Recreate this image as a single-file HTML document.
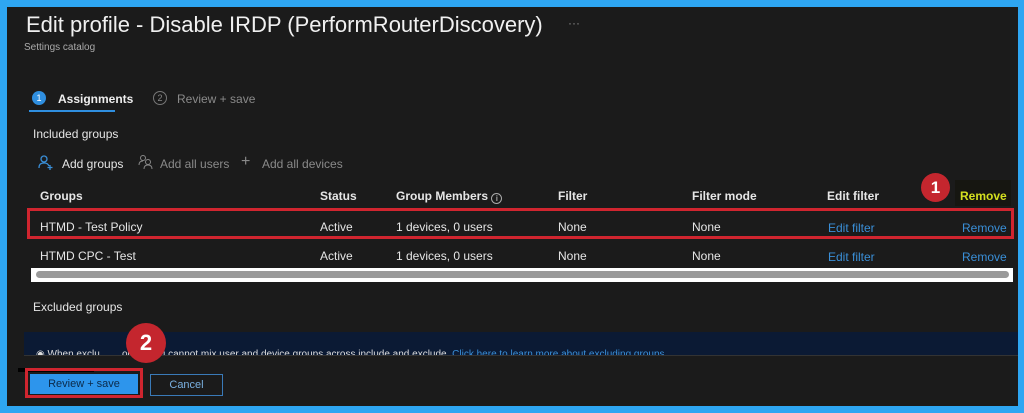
<!DOCTYPE html><html><head><style>
*{margin:0;padding:0;box-sizing:border-box}
body{width:1024px;height:413px;background:#2ea6f2;font-family:"Liberation Sans",sans-serif;position:relative;overflow:hidden}
#in{position:absolute;left:7px;top:7px;width:1011px;height:399px;background:#1b1b1b}
.a{position:absolute;white-space:nowrap}
.w{color:#e6e6e6;font-size:12px}
.h{color:#e6e6e6;font-size:12px;font-weight:bold}
.l{color:#3a8fd8;font-size:12px}
.g{color:#8a8a8a;font-size:12px}
</style></head><body>
<div id="in"></div>
<div class="a" style="left:26px;top:12px;font-size:22px;color:#f0f0f0">Edit profile - Disable IRDP (PerformRouterDiscovery)</div>
<div class="a" style="left:568px;top:16px;color:#888;font-size:12px">···</div>
<div class="a" style="left:24px;top:42px;font-size:10px;color:#aaa">Settings catalog</div>
<div class="a" style="left:32px;top:91px;width:14px;height:14px;border-radius:50%;background:#2f8fe0;color:#fff;font-size:9px;text-align:center;line-height:14px">1</div>
<div class="a" style="left:58px;top:92px;color:#eee;font-size:12px;font-weight:bold">Assignments</div>
<div class="a" style="left:29px;top:110px;width:86px;height:2px;background:#2f8fe0"></div>
<div class="a" style="left:153px;top:91px;width:14px;height:14px;border-radius:50%;border:1px solid #777;color:#888;font-size:9px;text-align:center;line-height:12px">2</div>
<div class="a g" style="left:177px;top:92px">Review + save</div>
<div class="a w" style="left:33px;top:127px">Included groups</div>
<svg class="a" style="left:38px;top:154px" width="16" height="16" viewBox="0 0 16 16" fill="none" stroke="#3a8fd8" stroke-width="1.3"><circle cx="6" cy="5" r="3"/><path d="M1 14c0-4 2-5 5-5s4 1 5 3M12 11v5M9.5 13.5h5"/></svg>
<div class="a w" style="left:62px;top:157px">Add groups</div>
<svg class="a" style="left:138px;top:154px" width="16" height="16" viewBox="0 0 16 16" fill="none" stroke="#888" stroke-width="1"><circle cx="5" cy="4" r="2.5"/><path d="M1 11c0-3 2-4 4-4"/><circle cx="10" cy="8" r="2.5"/><path d="M6 15c0-3 2-4 4-4s4 1 4 4"/></svg>
<div class="a g" style="left:160px;top:157px">Add all users</div>
<div class="a g" style="left:241px;top:153px;font-size:16px">+</div>
<div class="a g" style="left:262px;top:157px">Add all devices</div>
<div class="a h" style="left:40px;top:189px">Groups</div>
<div class="a h" style="left:320px;top:189px">Status</div>
<div class="a h" style="left:396px;top:189px">Group Members <span style="display:inline-block;width:11px;height:11px;border:1px solid #aaa;border-radius:50%;font-size:8px;text-align:center;line-height:9px;font-weight:normal;vertical-align:-1px">i</span></div>
<div class="a h" style="left:558px;top:189px">Filter</div>
<div class="a h" style="left:692px;top:189px">Filter mode</div>
<div class="a h" style="left:827px;top:189px">Edit filter</div>
<div class="a" style="left:955px;top:180px;width:56px;height:26px;background:#161611"></div>
<div class="a" style="left:960px;top:189px;color:#d4e020;font-size:12px;font-weight:bold">Remove</div>
<div class="a" style="left:921px;top:173px;width:29px;height:29px;border-radius:50%;background:#c4262e;color:#fff;font-size:17px;font-weight:bold;text-align:center;line-height:29px">1</div>
<div class="a" style="left:27px;top:208px;width:987px;height:31px;border:3px solid #d0252f"></div>
<div class="a w" style="left:40px;top:220px">HTMD - Test Policy</div>
<div class="a w" style="left:320px;top:220px">Active</div>
<div class="a w" style="left:396px;top:220px">1 devices, 0 users</div>
<div class="a w" style="left:558px;top:220px">None</div>
<div class="a w" style="left:692px;top:220px">None</div>
<div class="a l" style="left:828px;top:221px">Edit filter</div>
<div class="a l" style="left:962px;top:221px">Remove</div>
<div class="a w" style="left:40px;top:249px">HTMD CPC - Test</div>
<div class="a w" style="left:320px;top:249px">Active</div>
<div class="a w" style="left:396px;top:249px">1 devices, 0 users</div>
<div class="a w" style="left:558px;top:249px">None</div>
<div class="a w" style="left:692px;top:249px">None</div>
<div class="a l" style="left:828px;top:250px">Edit filter</div>
<div class="a l" style="left:962px;top:250px">Remove</div>
<div class="a" style="left:31px;top:268px;width:982px;height:14px;background:#fff"></div>
<div class="a" style="left:36px;top:271px;width:973px;height:7px;border-radius:4px;background:#9a9a9a"></div>
<div class="a w" style="left:33px;top:300px">Excluded groups</div>
<div class="a" style="left:24px;top:332px;width:994px;height:23px;background:#0b1a34"></div>
<div class="a" style="left:24px;top:355px;width:994px;height:1px;background:#333"></div>
<div class="a" style="left:36px;top:348px;font-size:10px;color:#ddd;height:7px;overflow:hidden;line-height:14px">&#9673; When exclu&nbsp;&nbsp;&nbsp;&nbsp;&nbsp;&nbsp;&nbsp;&nbsp;oups, you cannot mix user and device groups across include and exclude. <span style="color:#3a8fd8">Click here to learn more about excluding groups</span></div>
<div class="a" style="left:126px;top:323px;width:40px;height:40px;border-radius:50%;background:#c4262e;color:#fff;font-size:22px;font-weight:bold;text-align:center;line-height:40px">2</div>
<div class="a" style="left:18px;top:368px;width:76px;height:4px;background:#000"></div>
<div class="a" style="left:25px;top:368px;width:118px;height:30px;border:3px solid #d0252f"></div>
<div class="a" style="left:30px;top:374px;width:108px;height:20px;background:#2d95ec;color:#0b2a4a;font-size:11px;text-align:center;line-height:20px">Review + save</div>
<div class="a" style="left:150px;top:374px;width:73px;height:22px;border:1px solid #3a7ab8;color:#7ab0e0;font-size:11px;text-align:center;line-height:20px">Cancel</div>
</body></html>
